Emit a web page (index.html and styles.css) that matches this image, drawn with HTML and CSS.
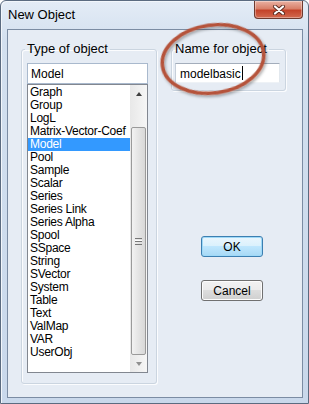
FILE: index.html
```html
<!DOCTYPE html>
<html>
<head>
    <meta name="viewport" content="width=device-width, initial-scale=1.0">
    <link rel="stylesheet" href="styles.css">
</head>
<body>
    <div class="window">
        <div class="titlebar">
            <span class="title">New Object</span>
            <button class="close">
                <svg width="14" height="10" viewBox="0 0 14 10">
                    <path d="M3 1.5 L11 8.5 M11 1.5 L3 8.5" stroke="#5a2a20" stroke-width="4" stroke-linecap="round"/>
                    <path d="M3 1.5 L11 8.5 M11 1.5 L3 8.5" stroke="#ffffff" stroke-width="2.2" stroke-linecap="round"/>
                </svg>
            </button>
        </div>

        <div class="client">
            <fieldset class="group type-group">
                <legend>Type of object</legend>
                <div class="combo-edit">Model</div>
                <div class="listbox">
                    <ul class="items">
                        <li>Graph</li>
                        <li>Group</li>
                        <li>LogL</li>
                        <li>Matrix-Vector-Coef</li>
                        <li class="selected">Model</li>
                        <li>Pool</li>
                        <li>Sample</li>
                        <li>Scalar</li>
                        <li>Series</li>
                        <li>Series Link</li>
                        <li>Series Alpha</li>
                        <li>Spool</li>
                        <li>SSpace</li>
                        <li>String</li>
                        <li>SVector</li>
                        <li>System</li>
                        <li>Table</li>
                        <li>Text</li>
                        <li>ValMap</li>
                        <li>VAR</li>
                        <li>UserObj</li>
                    </ul>
                    <div class="scrollbar">
                        <div class="arrow"><span class="tri-up"></span></div>
                        <div class="thumb"><span class="grip"></span></div>
                        <div class="arrow"><span class="tri-down"></span></div>
                    </div>
                </div>
            </fieldset>

            <div class="side">
                <fieldset class="group name-group">
                    <legend>Name for object</legend>
                    <div class="name-edit">modelbasic<span class="caret"></span></div>
                </fieldset>
                <button class="btn btn-ok">OK</button>
                <button class="btn btn-cancel">Cancel</button>
            </div>
        </div>

        <!-- red marker drawn over the screenshot -->
        <svg class="annotation" width="309" height="110" viewBox="0 0 309 110">
            <defs>
                <filter id="shade" x="-20%" y="-20%" width="140%" height="140%">
                    <feDropShadow dx="1" dy="2" stdDeviation="1.5" flood-color="#000" flood-opacity="0.35"/>
                </filter>
            </defs>
            <ellipse cx="213" cy="59" rx="51" ry="34" transform="rotate(-8 213 59)"
                     fill="none" stroke="#b5533b" stroke-width="3.5" filter="url(#shade)"/>
        </svg>
    </div>
</body>
</html>
```

FILE: styles.css
```css
body {
    margin: 0;
    font-family: "Liberation Sans", Arial, sans-serif;
    font-size: 12px;
    color: #000;
}

.window {
    position: relative;
    width: 309px;
    height: 404px;
    box-sizing: border-box;
    display: flex;
    flex-direction: column;
    border: 1px solid #5b6b80;
    border-radius: 6px 6px 0 0;
    background: linear-gradient(#e4ecf6, #d3e0ef 40px, #c9d8eb);
    box-shadow: inset 1px 1px 0 #f2f6fb;
}

.titlebar {
    height: 28px;
    display: flex;
    align-items: flex-start;
    justify-content: space-between;
}

.title {
    margin: 6px 0 0 7px;
    font-size: 13px;
}

.close {
    width: 49px;
    height: 18px;
    margin: 0 5px 0 0;
    padding: 0;
    display: flex;
    align-items: center;
    justify-content: center;
    border: 1px solid #6e3a2f;
    border-top: none;
    border-radius: 0 0 4px 4px;
    background: linear-gradient(#eab1a3, #d88069 45%, #c4432a 55%, #d26a50);
    box-shadow: inset 0 0 0 1px rgba(255, 255, 255, 0.35);
}

.client {
    flex: 1;
    margin: 0 5px 5px 6px;
    display: flex;
    align-items: flex-start;
    padding: 12px 0 0 13px;
    border: 1px solid #7b8ca3;
    background-color: #e6ecf4;
}

.group {
    margin: 0;
    border: 1px solid #cbd5e0;
    border-radius: 3px;
    box-shadow: inset 1px 1px 0 #fbfcfe, 1px 1px 0 #fbfcfe;
    min-width: 0;
}

.group legend {
    padding: 0 2px;
    margin-left: -2px;
    font-size: 13px;
    line-height: 14px;
}

.type-group {
    width: 136px;
    box-sizing: border-box;
    padding: 7px 8px 10px 5px;
}

.combo-edit {
    height: 21px;
    box-sizing: border-box;
    padding: 3px 0 0 3px;
    border: 1px solid #a9b9cd;
    background-color: #fff;
    font-size: 12px;
}

.listbox {
    height: 289px;
    box-sizing: border-box;
    display: flex;
    border: 1px solid #828790;
    background-color: #fff;
}

.items {
    flex: 1;
    min-width: 0;
    list-style: none;
    margin: 0;
    padding: 1px 0 0 0;
}

.items li {
    height: 13px;
    line-height: 13px;
    padding-left: 2px;
    white-space: nowrap;
    overflow: hidden;
    letter-spacing: -0.25px;
}

.items li.selected {
    background-color: #3399ff;
    color: #fff;
}

.scrollbar {
    width: 17px;
    flex-shrink: 0;
    display: flex;
    flex-direction: column;
    background: linear-gradient(90deg, #e8e8e8, #f6f6f6);
}

.arrow {
    height: 17px;
    display: flex;
    align-items: center;
    justify-content: center;
}

.tri-up {
    border: 3px solid transparent;
    border-top: none;
    border-bottom: 4px solid #404040;
}

.tri-down {
    border: 3px solid transparent;
    border-bottom: none;
    border-top: 4px solid #909090;
}

.thumb {
    height: 226px;
    margin: 25px 1px 0 1px;
    display: flex;
    align-items: center;
    justify-content: center;
    border: 1px solid #9a9a9a;
    border-radius: 2px;
    background: linear-gradient(90deg, #f2f2f2, #e4e4e4 50%, #d8d8d8);
}

.thumb + .arrow {
    margin-top: auto;
}

.grip {
    width: 7px;
    height: 5px;
    border-top: 1px solid #777;
    border-bottom: 1px solid #777;
    background: linear-gradient(#fff 1px, #777 1px, #777 2px, #fff 2px);
    background-size: 100% 2px;
    background-position: 0 1px;
    background-repeat: no-repeat;
}

.side {
    display: flex;
    flex-direction: column;
    margin-left: 14px;
}

.name-group {
    width: 115px;
    box-sizing: border-box;
    padding: 7px 5px 7px 3px;
}

.name-edit {
    height: 20px;
    box-sizing: border-box;
    padding: 3px 0 0 4px;
    display: flex;
    align-items: flex-start;
    border: 1px solid;
    border-color: #a3adbb #e2e8ee #eef2f6 #c6cfda;
    background-color: #fff;
    font-size: 12px;
}

.caret {
    width: 1px;
    height: 14px;
    margin: -1px 0 0 1px;
    background-color: #000;
}

.btn {
    width: 62px;
    height: 21px;
    margin-left: 30px;
    padding: 0;
    border-radius: 3px;
    font-family: "Liberation Sans", Arial, sans-serif;
    font-size: 12px;
    color: #000;
}

.btn-ok {
    margin-top: 145px;
    border: 1px solid #3c7fb1;
    background: linear-gradient(#eaf6fd, #d9f0fc 50%, #bee6fd 50%, #a7d9f5);
    box-shadow: inset 0 0 0 1px #9fd9f7;
}

.btn-cancel {
    margin-top: 23px;
    border: 1px solid #707070;
    background: linear-gradient(#f2f2f2, #ebebeb 50%, #dddddd 50%, #cfcfcf);
    box-shadow: inset 0 0 0 1px #fcfcfc;
}

.annotation {
    position: absolute;
    left: -1px;
    top: -1px;
    pointer-events: none;
}
```
